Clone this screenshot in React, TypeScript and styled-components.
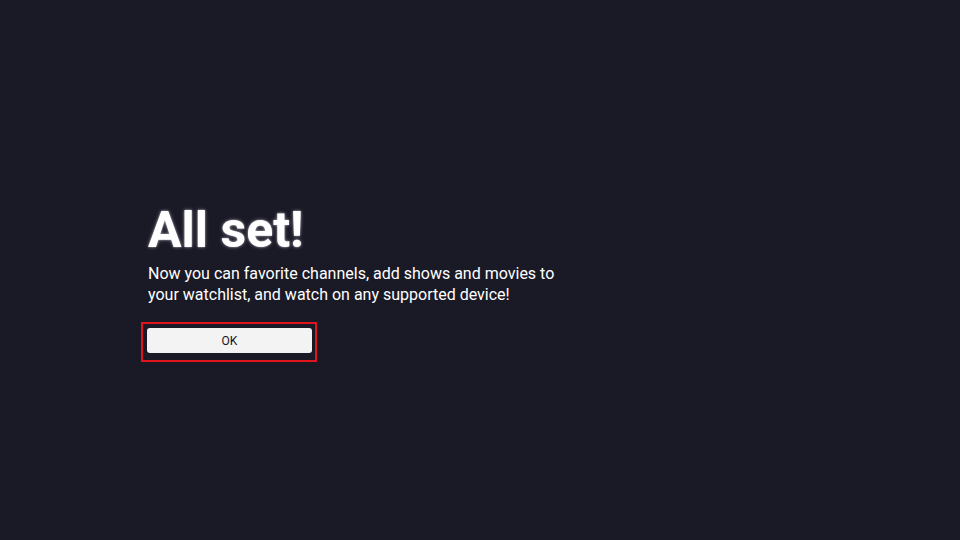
import styled, { createGlobalStyle } from 'styled-components';

const Global = createGlobalStyle`
    html, body {
        margin: 0;
        padding: 0;
        background: #1a1926;
    }
    #root {
        width: 960px;
        height: 540px;
    }
`;

const App = () => {
    return (
        <>
            <Global />
            <StyledScreen>
                <StyledContent>
                    <StyledTitle>All set!</StyledTitle>
                    <StyledText>
                        Now you can favorite channels, add shows and movies to
                        <br />
                        your watchlist, and watch on any supported device!
                    </StyledText>
                    <StyledFocus>
                        <StyledButton>OK</StyledButton>
                    </StyledFocus>
                </StyledContent>
            </StyledScreen>
        </>
    );
};

export default App;

const StyledScreen = styled.div`
    width: 960px;
    height: 540px;
    background: #1a1926;
    display: flex;
    align-items: center;
    font-family: Roboto, 'Liberation Sans', sans-serif;
`;

const StyledContent = styled.div`
    display: flex;
    flex-direction: column;
    align-items: flex-start;
    padding-left: 148px;
    margin-top: 24px;
`;

const StyledTitle = styled.h1`
    margin: 0;
    font-size: 50px;
    font-weight: 700;
    line-height: 56px;
    color: #ffffff;
    text-shadow: 0 0 2px rgba(190, 190, 200, 0.95), 0 0 4px rgba(150, 150, 160, 0.6);
`;

const StyledText = styled.p`
    margin: 5px 0 0;
    font-size: 16px;
    line-height: 21px;
    color: #ffffff;
`;

const StyledFocus = styled.div`
    margin: 17px 0 0 -7px;
    padding: 4px 3px 7px 4px;
    border: 2px solid #e0141c;
`;

const StyledButton = styled.button`
    display: block;
    width: 165px;
    height: 25px;
    border: none;
    border-radius: 3px;
    background: #f3f3f3;
    color: #15141f;
    font-family: Roboto, 'Liberation Sans', sans-serif;
    font-size: 12px;
    padding: 0;
`;
